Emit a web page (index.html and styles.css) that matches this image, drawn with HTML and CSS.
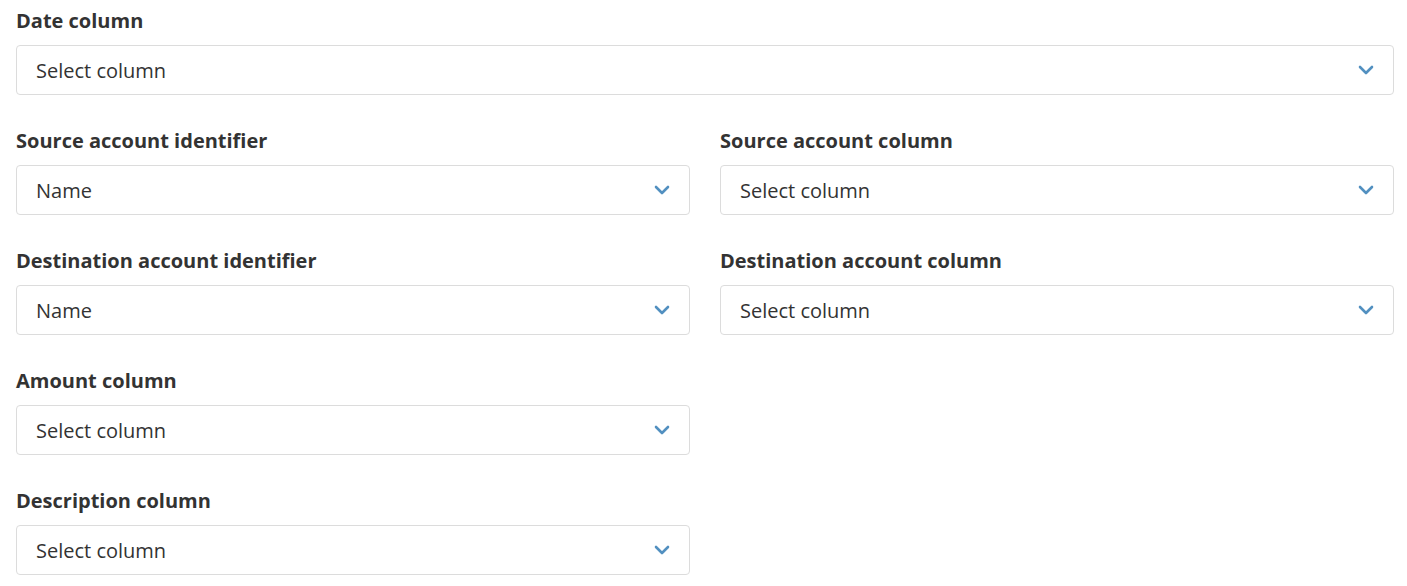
FILE: index.html
```html
<!DOCTYPE html>
<html>
<head>
<meta charset="utf-8">
<link rel="stylesheet" href="styles.css">
</head>
<body>
<form class="form">
  <div class="field full">
    <label class="label">Date column</label>
    <div class="select"><span>Select column</span><svg class="chev" width="16" height="10" viewBox="0 0 16 10"><path d="M2 2l6 6 6-6" fill="none" stroke="#5290c0" stroke-width="2.6" stroke-linecap="round" stroke-linejoin="round"/></svg></div>
  </div>
  <div class="field">
    <label class="label">Source account identifier</label>
    <div class="select"><span>Name</span><svg class="chev" width="16" height="10" viewBox="0 0 16 10"><path d="M2 2l6 6 6-6" fill="none" stroke="#5290c0" stroke-width="2.6" stroke-linecap="round" stroke-linejoin="round"/></svg></div>
  </div>
  <div class="field">
    <label class="label">Source account column</label>
    <div class="select"><span>Select column</span><svg class="chev" width="16" height="10" viewBox="0 0 16 10"><path d="M2 2l6 6 6-6" fill="none" stroke="#5290c0" stroke-width="2.6" stroke-linecap="round" stroke-linejoin="round"/></svg></div>
  </div>
  <div class="field">
    <label class="label">Destination account identifier</label>
    <div class="select"><span>Name</span><svg class="chev" width="16" height="10" viewBox="0 0 16 10"><path d="M2 2l6 6 6-6" fill="none" stroke="#5290c0" stroke-width="2.6" stroke-linecap="round" stroke-linejoin="round"/></svg></div>
  </div>
  <div class="field">
    <label class="label">Destination account column</label>
    <div class="select"><span>Select column</span><svg class="chev" width="16" height="10" viewBox="0 0 16 10"><path d="M2 2l6 6 6-6" fill="none" stroke="#5290c0" stroke-width="2.6" stroke-linecap="round" stroke-linejoin="round"/></svg></div>
  </div>
  <div class="field">
    <label class="label">Amount column</label>
    <div class="select"><span>Select column</span><svg class="chev" width="16" height="10" viewBox="0 0 16 10"><path d="M2 2l6 6 6-6" fill="none" stroke="#5290c0" stroke-width="2.6" stroke-linecap="round" stroke-linejoin="round"/></svg></div>
  </div>
  <div class="field empty"></div>
  <div class="field">
    <label class="label">Description column</label>
    <div class="select"><span>Select column</span><svg class="chev" width="16" height="10" viewBox="0 0 16 10"><path d="M2 2l6 6 6-6" fill="none" stroke="#5290c0" stroke-width="2.6" stroke-linecap="round" stroke-linejoin="round"/></svg></div>
  </div>
</form>
</body>
</html>
```
FILE: styles.css
```css
html, body {
  margin: 0;
  padding: 0;
  background: #fff;
}
body {
  font-family: "Open Sans", "Liberation Sans", sans-serif;
  color: #333;
  padding: 8px 13px 0 16px;
}
.form {
  display: grid;
  grid-template-columns: 674px 674px;
  column-gap: 30px;
  row-gap: 33px;
}
.field {
  display: flex;
  flex-direction: column;
  gap: 11px;
}
.field.full {
  grid-column: 1 / -1;
}
.label {
  font-size: 20px;
  font-weight: 700;
  line-height: 26px;
  color: #333;
}
.select {
  box-sizing: border-box;
  height: 50px;
  border: 1px solid #dcdcdc;
  border-radius: 4px;
  padding: 0 19px 0 19px;
  display: flex;
  align-items: center;
  justify-content: space-between;
  font-size: 20px;
  color: #333;
}
.chev {
  display: block;
}
```
